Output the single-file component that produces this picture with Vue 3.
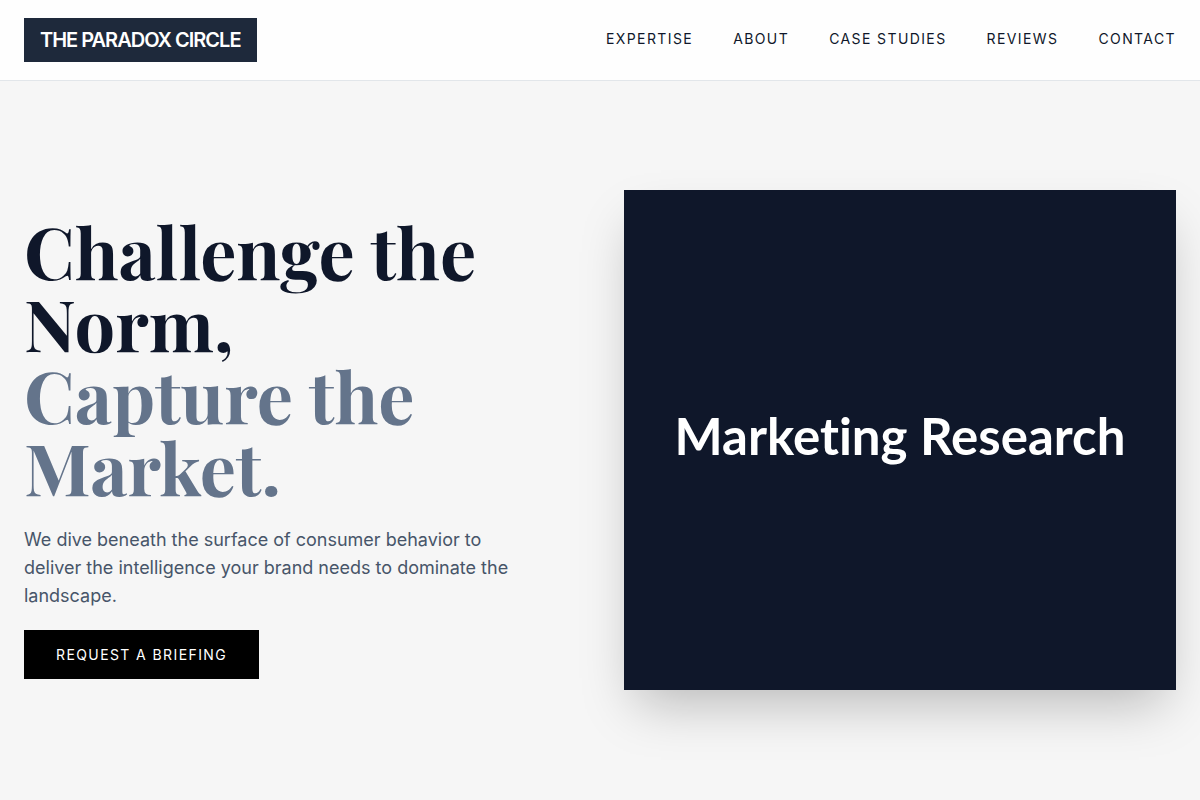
<script setup>
const links = ['Expertise', 'About', 'Case Studies', 'Reviews', 'Contact']
</script>

<template>
  <header class="bar">
    <a class="brand" href="#">THE PARADOX CIRCLE</a>
    <nav class="nav">
      <a v-for="link in links" :key="link" href="#">{{ link }}</a>
    </nav>
  </header>
  <main class="hero">
    <section class="copy">
      <h1>Challenge the Norm,<br /><span>Capture the Market.</span></h1>
      <p>We dive beneath the surface of consumer behavior to deliver the intelligence your brand needs to dominate the landscape.</p>
      <a class="cta" href="#">Request a Briefing</a>
    </section>
    <div class="visual">Marketing Research</div>
  </main>
</template>

<style>
body {
  background: #f6f6f6;
}
</style>

<style scoped>
.bar {
  display: flex;
  align-items: center;
  justify-content: space-between;
  height: 80px;
  margin-bottom: -1px;
  padding: 0 24px;
  background: #fefefe;
  border-bottom: 1px solid #e2e6ea;
  font-family: Inter, sans-serif;
}
.brand {
  padding: 8px 16px;
  background: #1e293b;
  color: #fff;
  font-size: 20px;
  line-height: 28px;
  font-weight: 600;
  letter-spacing: -1px;
  text-decoration: none;
}
.nav {
  display: flex;
  gap: 40px;
}
.nav a {
  border-bottom: 2px solid transparent;
  color: #0f172a;
  font-size: 14px;
  line-height: 20px;
  letter-spacing: 1.4px;
  text-transform: uppercase;
  text-decoration: none;
}
.nav a:hover {
  border-bottom-color: #0f172a;
}
.hero {
  box-sizing: border-box;
  min-height: calc(100vh - 80px);
  display: grid;
  grid-template-columns: 1fr 1fr;
  gap: 48px;
  align-items: center;
  padding: 0 24px;
}
.copy {
  font-family: Inter, sans-serif;
  font-size: 16px;
  line-height: 24px;
}
h1 {
  margin: 0 0 24px;
  font-family: "Playfair Display", "Liberation Serif", serif;
  font-size: 72px;
  line-height: 72px;
  font-weight: 700;
  color: #0f172a;
}
h1 span {
  color: #64748b;
}
p {
  max-width: 512px;
  margin: 0 0 32px;
  color: #475569;
  font-size: 18px;
  line-height: 28px;
}
.cta {
  padding: 16px 32px;
  background: #000;
  color: #fff;
  font-size: 14px;
  line-height: 20px;
  letter-spacing: 1.4px;
  text-transform: uppercase;
  text-decoration: none;
}
.visual {
  box-sizing: border-box;
  display: flex;
  align-items: center;
  justify-content: center;
  min-height: 500px;
  padding-bottom: 10px;
  background: #0f172a;
  box-shadow: 0 25px 50px -12px rgba(0, 0, 0, 0.25);
  color: #fff;
  font-family: Lato, sans-serif;
  font-size: 51px;
  font-weight: 700;
  font-variant-ligatures: none;
}
</style>
